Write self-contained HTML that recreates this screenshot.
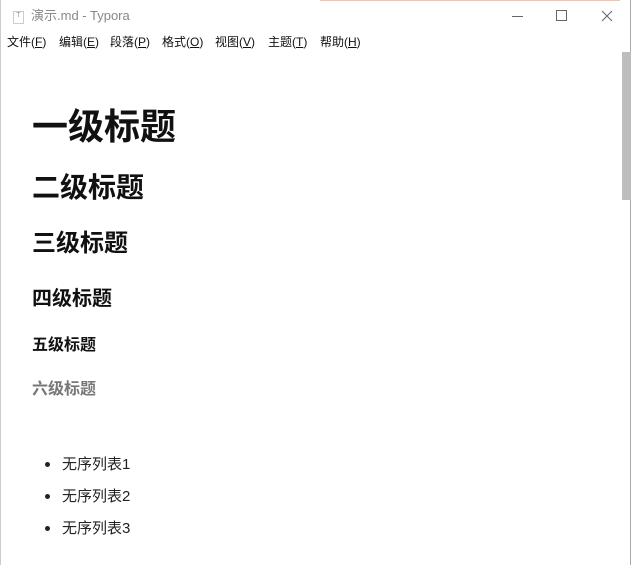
<!DOCTYPE html>
<html><head><meta charset="utf-8"><style>
body{margin:0;width:634px;height:565px;background:#fff;position:relative;overflow:hidden;font-family:"Liberation Sans","Noto Sans CJK SC",sans-serif;}
.a{position:absolute;white-space:nowrap;line-height:1;}
.m{position:absolute;top:36px;font-size:12px;color:#111;white-space:nowrap;line-height:1}
h{position:absolute;left:32px;font-weight:bold;color:#111;line-height:1;white-space:nowrap;}
</style></head><body>
<div style="position:absolute;left:0;top:0;width:631px;height:565px;border-left:1px solid #ccc;border-right:1px solid #aaa;box-sizing:border-box"></div>
<div style="position:absolute;left:320px;top:0;width:300px;height:1px;background:#e8c8b8"></div>
<div class="a" style="left:13px;top:11px;width:9px;height:11px;border:1px solid #ccc;font-size:7px;color:#999;text-align:center">T</div>
<div class="a" style="left:31px;top:9px;font-size:13px;color:#888">演示.md - Typora</div>
<div class="a" style="left:512px;top:16px;width:11px;height:1px;background:#666"></div>
<div class="a" style="left:556px;top:10px;width:9px;height:9px;border:1px solid #666"></div>
<svg class="a" style="left:601px;top:10px" width="12" height="12"><path d="M1 1L11 11M11 1L1 11" stroke="#666" stroke-width="1"/></svg>
<div class="m" style="left:7px">文件(<u>F</u>)</div>
<div class="m" style="left:59px">编辑(<u>E</u>)</div>
<div class="m" style="left:110px">段落(<u>P</u>)</div>
<div class="m" style="left:162px">格式(<u>O</u>)</div>
<div class="m" style="left:215px">视图(<u>V</u>)</div>
<div class="m" style="left:268px">主题(<u>T</u>)</div>
<div class="m" style="left:320px">帮助(<u>H</u>)</div>
<div style="position:absolute;left:622px;top:52px;width:9px;height:148px;background:#bdbdbd"></div>
<h style="top:109px;font-size:36px">一级标题</h>
<h style="top:174px;font-size:28px">二级标题</h>
<h style="top:232px;font-size:24px">三级标题</h>
<h style="top:289px;font-size:20px">四级标题</h>
<h style="top:338px;font-size:16px">五级标题</h>
<h style="top:382px;font-size:16px;color:#777">六级标题</h>
<div class="a" style="left:45px;top:462px;width:5px;height:5px;border-radius:50%;background:#222"></div>
<div class="a" style="left:62px;top:457px;font-size:15px;color:#222">无序列表1</div>
<div class="a" style="left:45px;top:494px;width:5px;height:5px;border-radius:50%;background:#222"></div>
<div class="a" style="left:62px;top:489px;font-size:15px;color:#222">无序列表2</div>
<div class="a" style="left:45px;top:526px;width:5px;height:5px;border-radius:50%;background:#222"></div>
<div class="a" style="left:62px;top:521px;font-size:15px;color:#222">无序列表3</div>
</body></html>
